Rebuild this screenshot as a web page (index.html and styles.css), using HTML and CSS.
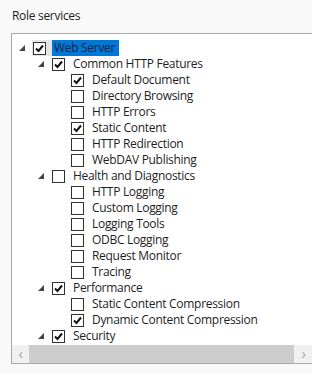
FILE: index.html
```html
<!DOCTYPE html>
<html lang="en">
<head>
    <meta charset="UTF-8">
    <title>Role services</title>
    <link rel="stylesheet" href="styles.css">
</head>
<body>
    <h1 class="title">Role services</h1>

    <div class="tree-box">
        <div class="tree">
            <!-- Web Server -->
            <div class="row level-0">
                <span class="arrow"><svg width="7" height="7"><polygon points="6,0 6,6 0,6" /></svg></span>
                <span class="check-wrap focus"><span class="check on"><svg width="11" height="11"><polyline points="2,5.5 4.5,8 9,2.5" /></svg></span></span>
                <span class="label selected">Web Server</span>
            </div>
            <div class="row level-1">
                <span class="arrow"><svg width="7" height="7"><polygon points="6,0 6,6 0,6" /></svg></span>
                <span class="check-wrap"><span class="check on"><svg width="11" height="11"><polyline points="2,5.5 4.5,8 9,2.5" /></svg></span></span>
                <span class="label">Common HTTP Features</span>
            </div>
            <div class="row level-2">
                <span class="arrow"></span>
                <span class="check-wrap"><span class="check on"><svg width="11" height="11"><polyline points="2,5.5 4.5,8 9,2.5" /></svg></span></span>
                <span class="label">Default Document</span>
            </div>
            <div class="row level-2">
                <span class="arrow"></span>
                <span class="check-wrap"><span class="check"></span></span>
                <span class="label">Directory Browsing</span>
            </div>
            <div class="row level-2">
                <span class="arrow"></span>
                <span class="check-wrap"><span class="check"></span></span>
                <span class="label">HTTP Errors</span>
            </div>
            <div class="row level-2">
                <span class="arrow"></span>
                <span class="check-wrap"><span class="check on"><svg width="11" height="11"><polyline points="2,5.5 4.5,8 9,2.5" /></svg></span></span>
                <span class="label">Static Content</span>
            </div>
            <div class="row level-2">
                <span class="arrow"></span>
                <span class="check-wrap"><span class="check"></span></span>
                <span class="label">HTTP Redirection</span>
            </div>
            <div class="row level-2">
                <span class="arrow"></span>
                <span class="check-wrap"><span class="check"></span></span>
                <span class="label">WebDAV Publishing</span>
            </div>

            <!-- Health and Diagnostics -->
            <div class="row level-1">
                <span class="arrow"><svg width="7" height="7"><polygon points="6,0 6,6 0,6" /></svg></span>
                <span class="check-wrap"><span class="check"></span></span>
                <span class="label">Health and Diagnostics</span>
            </div>
            <div class="row level-2">
                <span class="arrow"></span>
                <span class="check-wrap"><span class="check"></span></span>
                <span class="label">HTTP Logging</span>
            </div>
            <div class="row level-2">
                <span class="arrow"></span>
                <span class="check-wrap"><span class="check"></span></span>
                <span class="label">Custom Logging</span>
            </div>
            <div class="row level-2">
                <span class="arrow"></span>
                <span class="check-wrap"><span class="check"></span></span>
                <span class="label">Logging Tools</span>
            </div>
            <div class="row level-2">
                <span class="arrow"></span>
                <span class="check-wrap"><span class="check"></span></span>
                <span class="label">ODBC Logging</span>
            </div>
            <div class="row level-2">
                <span class="arrow"></span>
                <span class="check-wrap"><span class="check"></span></span>
                <span class="label">Request Monitor</span>
            </div>
            <div class="row level-2">
                <span class="arrow"></span>
                <span class="check-wrap"><span class="check"></span></span>
                <span class="label">Tracing</span>
            </div>

            <!-- Performance -->
            <div class="row level-1">
                <span class="arrow"><svg width="7" height="7"><polygon points="6,0 6,6 0,6" /></svg></span>
                <span class="check-wrap"><span class="check on"><svg width="11" height="11"><polyline points="2,5.5 4.5,8 9,2.5" /></svg></span></span>
                <span class="label">Performance</span>
            </div>
            <div class="row level-2">
                <span class="arrow"></span>
                <span class="check-wrap"><span class="check"></span></span>
                <span class="label">Static Content Compression</span>
            </div>
            <div class="row level-2">
                <span class="arrow"></span>
                <span class="check-wrap"><span class="check on"><svg width="11" height="11"><polyline points="2,5.5 4.5,8 9,2.5" /></svg></span></span>
                <span class="label">Dynamic Content Compression</span>
            </div>

            <!-- Security -->
            <div class="row level-1">
                <span class="arrow"><svg width="7" height="7"><polygon points="6,0 6,6 0,6" /></svg></span>
                <span class="check-wrap"><span class="check on"><svg width="11" height="11"><polyline points="2,5.5 4.5,8 9,2.5" /></svg></span></span>
                <span class="label">Security</span>
            </div>
        </div>

        <div class="hscroll">
            <span class="scroll-btn">&lsaquo;</span>
            <span class="thumb"></span>
            <span class="scroll-btn right">&rsaquo;</span>
        </div>
    </div>
</body>
</html>
```

FILE: styles.css
```css
* {
    margin: 0;
    padding: 0;
    box-sizing: border-box;
}

body {
    background-color: #f9f9f9;
    font-family: "Open Sans", "Noto Sans", sans-serif;
    font-size: 12px;
    letter-spacing: -0.3px;
    color: #1e1e1e;
    overflow: hidden;
    width: 312px;
    height: 374px;
}

.title {
    font-size: 12px;
    font-weight: normal;
    line-height: 16px;
    padding: 8px 12px 0 12px;
    height: 33px;
}

.tree-box {
    margin-left: 11px;
    width: 303px;
    border: 1px solid #a9a9a9;
    background-color: white;
}

.tree {
    height: 311px;
    overflow: hidden;
    padding-top: 6px;
}

.row {
    display: flex;
    align-items: center;
    height: 16px;
    white-space: nowrap;
}

.level-0 {
    padding-left: 5px;
}

.level-1 {
    padding-left: 24px;
}

.level-2 {
    padding-left: 43px;
}

.arrow {
    width: 16px;
    height: 16px;
    display: flex;
    align-items: center;
    padding-left: 2px;
    padding-top: 1px;
}

.arrow polygon {
    fill: #444;
}

.check-wrap {
    display: flex;
    align-items: center;
    height: 16px;
    padding: 0 6px 0 0;
}

.check-wrap.focus {
    background-color: #e5e5e5;
    margin-left: -1px;
    padding-left: 1px;
    padding-right: 8px;
}

.check {
    width: 13px;
    height: 13px;
    border: 1px solid #333;
    background-color: white;
    display: flex;
    align-items: center;
    justify-content: center;
}

.check polyline {
    fill: none;
    stroke: #111;
    stroke-width: 2;
}

.label {
    line-height: 16px;
    padding: 0 2px;
}

.label.selected {
    background-color: #0078d7;
    color: #1e1e3c;
    margin-left: -2px;
    padding: 0 4px 0 2px;
}

.hscroll {
    display: flex;
    height: 18px;
    background-color: #f0f0f0;
}

.scroll-btn {
    width: 17px;
    text-align: center;
    color: #a6a6a6;
    font-size: 15px;
    line-height: 16px;
}

.scroll-btn.right {
    width: 19px;
}

.thumb {
    flex: 1;
    background-color: #cdcdcd;
}
```
